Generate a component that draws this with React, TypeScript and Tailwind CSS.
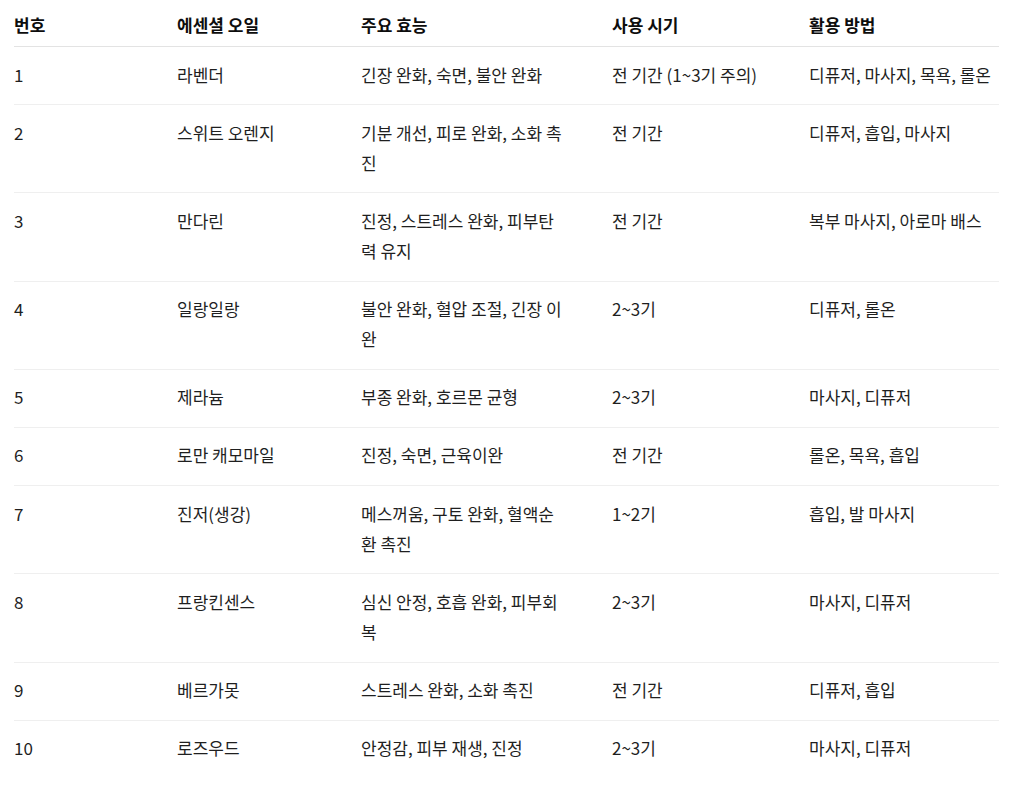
import React from "react";

type Row = [string, string, string[], string, string];

const rows: Row[] = [
  ["1", "라벤더", ["긴장 완화, 숙면, 불안 완화"], "전 기간 (1~3기 주의)", "디퓨저, 마사지, 목욕, 롤온"],
  ["2", "스위트 오렌지", ["기분 개선, 피로 완화, 소화 촉", "진"], "전 기간", "디퓨저, 흡입, 마사지"],
  ["3", "만다린", ["진정, 스트레스 완화, 피부탄", "력 유지"], "전 기간", "복부 마사지, 아로마 배스"],
  ["4", "일랑일랑", ["불안 완화, 혈압 조절, 긴장 이", "완"], "2~3기", "디퓨저, 롤온"],
  ["5", "제라늄", ["부종 완화, 호르몬 균형"], "2~3기", "마사지, 디퓨저"],
  ["6", "로만 캐모마일", ["진정, 숙면, 근육이완"], "전 기간", "롤온, 목욕, 흡입"],
  ["7", "진저(생강)", ["메스꺼움, 구토 완화, 혈액순", "환 촉진"], "1~2기", "흡입, 발 마사지"],
  ["8", "프랑킨센스", ["심신 안정, 호흡 완화, 피부회", "복"], "2~3기", "마사지, 디퓨저"],
  ["9", "베르가못", ["스트레스 완화, 소화 촉진"], "전 기간", "디퓨저, 흡입"],
  ["10", "로즈우드", ["안정감, 피부 재생, 진정"], "2~3기", "마사지, 디퓨저"],
];

const headers = ["번호", "에센셜 오일", "주요 효능", "사용 시기", "활용 방법"];

export default function App() {
  return (
    <div
      className="w-[1024px] h-[785px] bg-white overflow-hidden"
      style={{ fontFamily: '"Noto Sans CJK KR", "Noto Sans", sans-serif' }}
    >
      <table className="ml-[14px] w-[985px] table-fixed border-collapse text-[17px] leading-[30px] text-[#1f1f1f]">
        <colgroup>
          <col className="w-[163px]" />
          <col className="w-[184px]" />
          <col className="w-[251px]" />
          <col className="w-[197px]" />
          <col className="w-[190px]" />
        </colgroup>
        <thead>
          <tr className="border-b border-[#e3e3e3]">
            {headers.map((h) => (
              <th
                key={h}
                className="text-left font-semibold text-[#0d0d0d] pt-[10px] pb-[6px] p-0 whitespace-nowrap"
              >
                {h}
              </th>
            ))}
          </tr>
        </thead>
        <tbody>
          {rows.map((r, i) => (
            <tr
              key={r[0]}
              className={i < rows.length - 1 ? "border-b border-[#efefef]" : ""}
            >
              <td className="align-top pt-[12.5px] pb-[14.7px] whitespace-nowrap">{r[0]}</td>
              <td className="align-top pt-[12.5px] pb-[14.7px] whitespace-nowrap">{r[1]}</td>
              <td className="align-top pt-[12.5px] pb-[14.7px] whitespace-nowrap">
                {r[2].map((line, j) => (
                  <div key={j}>{line}</div>
                ))}
              </td>
              <td className="align-top pt-[12.5px] pb-[14.7px] whitespace-nowrap">{r[3]}</td>
              <td className="align-top pt-[12.5px] pb-[14.7px] whitespace-nowrap">{r[4]}</td>
            </tr>
          ))}
        </tbody>
      </table>
    </div>
  );
}
